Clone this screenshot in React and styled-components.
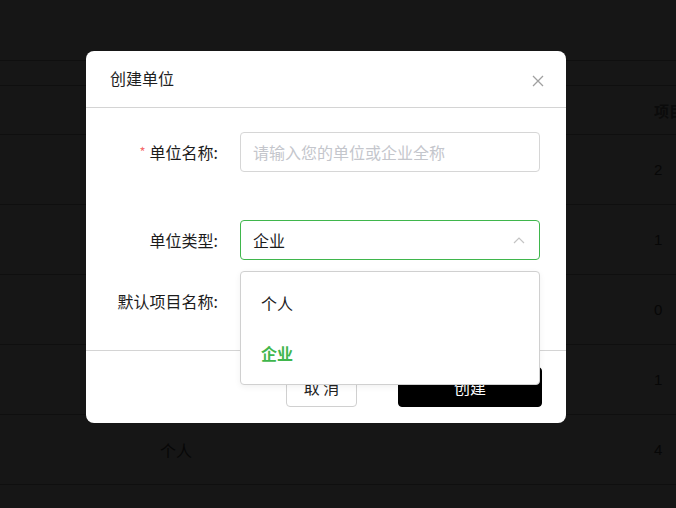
import React from "react";
import styled, { createGlobalStyle } from "styled-components";

const Global = createGlobalStyle`
  html, body {
    margin: 0;
    padding: 0;
    background: #161616;
    font-family: "Noto Sans CJK SC", "Noto Sans", sans-serif;
  }
`;

const Page = styled.div`
  position: relative;
  width: 676px;
  height: 508px;
  overflow: hidden;
  background: #161616;
`;

const Toolbar = styled.div`
  height: 61px;
  border-bottom: 1px solid #0f0f0f;
  box-sizing: border-box;
`;

const SubBar = styled.div`
  height: 25px;
  border-bottom: 1px solid #0f0f0f;
  box-sizing: border-box;
`;

const Row = styled.div`
  display: grid;
  grid-template-columns: 654px 1fr;
  align-items: center;
  height: ${(p) => p.h}px;
  border-bottom: 1px solid #0f0f0f;
  box-sizing: border-box;
  color: #070707;
  font-size: 15px;
  white-space: nowrap;
  overflow: hidden;
`;

const TypeCell = styled.div`
  padding-left: 160px;
  font-size: 16px;
`;

const NumCell = styled.div`
  font-family: "Liberation Sans", Arial, sans-serif;
`;

const HeadCell = styled.div`
  font-family: "Liberation Serif", "Noto Sans CJK SC", serif;
  font-weight: bold;
  color: #0b0b0b;
  overflow: hidden;
`;

const Modal = styled.div`
  position: absolute;
  left: 86px;
  top: 51px;
  width: 480px;
  background: #fff;
  border-radius: 8px;
`;

const Header = styled.div`
  display: flex;
  align-items: center;
  justify-content: space-between;
  height: 57px;
  padding: 0 22px 0 24px;
  border-bottom: 1px solid #d4d4d4;
  box-sizing: border-box;
`;

const Title = styled.div`
  font-size: 16px;
  color: #1f1f1f;
  margin-top: -3px;
`;

const Close = styled.svg`
  width: 12px;
  height: 12px;
  margin-top: 4px;
`;

const Body = styled.div`
  padding: 24px 26px 29px 24px;
`;

const Field = styled.div`
  position: relative;
  display: flex;
  align-items: center;
  height: 40px;
  margin-bottom: ${(p) => p.mb}px;
`;

const Label = styled.div`
  width: 108px;
  margin-right: 22px;
  text-align: right;
  font-size: 16px;
  color: #1c1c1c;
  white-space: nowrap;
`;

const Star = styled.span`
  color: #f56c6c;
  font-size: 13px;
  margin-right: 4px;
  vertical-align: 2px;
`;

const Input = styled.input`
  width: 300px;
  height: 40px;
  box-sizing: border-box;
  border: 1px solid #d6d6d6;
  border-radius: 4px;
  padding: 0 12px;
  font-size: 16px;
  font-family: inherit;
  color: #222;
  outline: none;
  &::placeholder {
    color: #c4c6cc;
  }
`;

const Select = styled.div`
  display: flex;
  align-items: center;
  justify-content: space-between;
  width: 300px;
  height: 40px;
  box-sizing: border-box;
  border: 1px solid #3fb64c;
  border-radius: 4px;
  padding: 0 14px 0 12px;
  font-size: 16px;
  color: #1c1c1c;
`;

const Chevron = styled.svg`
  width: 12px;
  height: 8px;
`;

const Menu = styled.div`
  position: absolute;
  left: 130px;
  top: 51px;
  width: 300px;
  box-sizing: border-box;
  padding: 6px 0;
  background: #fff;
  border: 1px solid #d0d0d0;
  border-radius: 4px;
  box-shadow: 0 2px 6px rgba(0, 0, 0, 0.06);
  z-index: 2;
`;

const Option = styled.div`
  height: 50px;
  display: flex;
  align-items: center;
  padding-left: 20px;
  font-size: 16px;
  color: ${(p) => (p.active ? "#3fb64c" : "#1c1c1c")};
  font-weight: ${(p) => (p.active ? "bold" : "normal")};
`;

const Footer = styled.div`
  display: flex;
  justify-content: flex-end;
  gap: 41px;
  padding: 16px 24px 16px 24px;
  border-top: 1px solid #d4d4d4;
`;

const Button = styled.button`
  height: 40px;
  width: ${(p) => p.w}px;
  box-sizing: border-box;
  border-radius: 4px;
  font-family: inherit;
  font-size: 16px;
  border: 1px solid ${(p) => (p.primary ? "#000" : "#d0d0d0")};
  background: ${(p) => (p.primary ? "#000" : "#fff")};
  color: ${(p) => (p.primary ? "#fff" : "#222")};
`;

const rows = [
  { type: "", num: "2" },
  { type: "", num: "1" },
  { type: "", num: "0" },
  { type: "", num: "1" },
  { type: "个人", num: "4" },
];

export default function App() {
  return (
    <Page>
      <Global />
      <Toolbar />
      <SubBar />
      <Row h={49}>
        <div />
        <HeadCell>项目</HeadCell>
      </Row>
      {rows.map((r, i) => (
        <Row h={70} key={i}>
          <TypeCell>{r.type}</TypeCell>
          <NumCell>{r.num}</NumCell>
        </Row>
      ))}

      <Modal>
        <Header>
          <Title>创建单位</Title>
          <Close viewBox="0 0 12 12">
            <path d="M1 1 L11 11 M11 1 L1 11" stroke="#a0a0a0" strokeWidth="1.3" />
          </Close>
        </Header>
        <Body>
          <Field mb={48}>
            <Label>
              <Star>*</Star>单位名称:
            </Label>
            <Input placeholder="请输入您的单位或企业全称" />
          </Field>
          <Field mb={21}>
            <Label>单位类型:</Label>
            <Select>
              <span>企业</span>
              <Chevron viewBox="0 0 12 8">
                <path d="M1 7 L6 2 L11 7" fill="none" stroke="#c4c4c4" strokeWidth="1.2" />
              </Chevron>
            </Select>
            <Menu>
              <Option>个人</Option>
              <Option active>企业</Option>
            </Menu>
          </Field>
          <Field mb={0}>
            <Label>默认项目名称:</Label>
          </Field>
        </Body>
        <Footer>
          <Button w={71}>取 消</Button>
          <Button w={144} primary>
            创建
          </Button>
        </Footer>
      </Modal>
    </Page>
  );
}
